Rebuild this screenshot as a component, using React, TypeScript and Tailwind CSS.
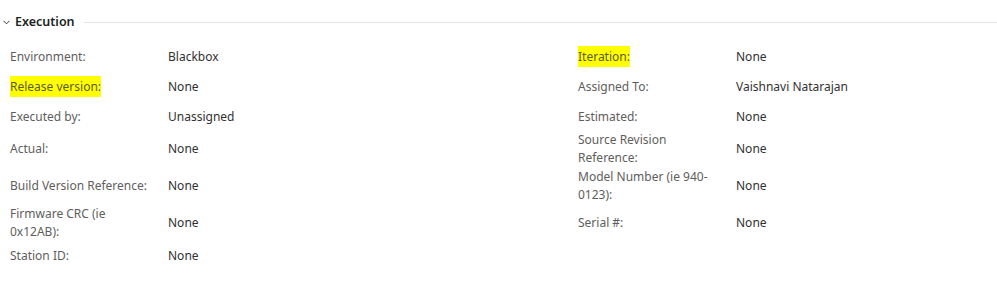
import React from "react";

type Field = { label: string; value: string; highlight?: boolean };

const rows: [Field, Field | null][] = [
  [{ label: "Environment:", value: "Blackbox" }, { label: "Iteration:", value: "None", highlight: true }],
  [{ label: "Release version:", value: "None", highlight: true }, { label: "Assigned To:", value: "Vaishnavi Natarajan" }],
  [{ label: "Executed by:", value: "Unassigned" }, { label: "Estimated:", value: "None" }],
  [{ label: "Actual:", value: "None" }, { label: "Source Revision Reference:", value: "None" }],
  [{ label: "Build Version Reference:", value: "None" }, { label: "Model Number (ie 940-0123):", value: "None" }],
  [{ label: "Firmware CRC (ie 0x12AB):", value: "None" }, { label: "Serial #:", value: "None" }],
  [{ label: "Station ID:", value: "None" }, null],
];

function Cell({ field }: { field: Field | null }) {
  if (!field) return <><div /><div /></>;
  return (
    <>
      <div className="flex items-center pr-2">
        <span className="w-[146px] leading-[18px] text-[#605e5c]">
          {field.highlight ? (
            <span className="bg-[#ffff00] text-[#5c5c30] py-[2px]">{field.label}</span>
          ) : (
            field.label
          )}
        </span>
      </div>
      <div className="flex items-center text-[#323130]">{field.value}</div>
    </>
  );
}

export default function App() {
  return (
    <div
      className="w-[997px] h-[290px] bg-white text-[12px] overflow-hidden"
      style={{ fontFamily: '"Noto Sans", "Open Sans", sans-serif' }}
    >
      {/* Section header */}
      <div className="flex items-center h-[22px] mt-[11px] pl-[3px]">
        <svg width="7" height="5" viewBox="0 0 7 5" className="mr-[5px] mt-[1px]">
          <path d="M0.5 0.8 L3.5 3.8 L6.5 0.8" fill="none" stroke="#323130" strokeWidth="1" />
        </svg>
        <span className="font-semibold text-[12.5px] text-[#201f1e]">Execution</span>
        <div className="flex-1 h-px bg-[#e6e6e6] ml-[9px]" />
      </div>

      {/* Fields */}
      <div className="grid grid-cols-[158px_410px_158px_1fr] grid-rows-[30px_30px_29px_36px_38px_36px_30px] pl-[10px] mt-[9px]">
        {rows.map(([l, r], i) => (
          <React.Fragment key={i}>
            <Cell field={l} />
            <Cell field={r} />
          </React.Fragment>
        ))}
      </div>
    </div>
  );
}
